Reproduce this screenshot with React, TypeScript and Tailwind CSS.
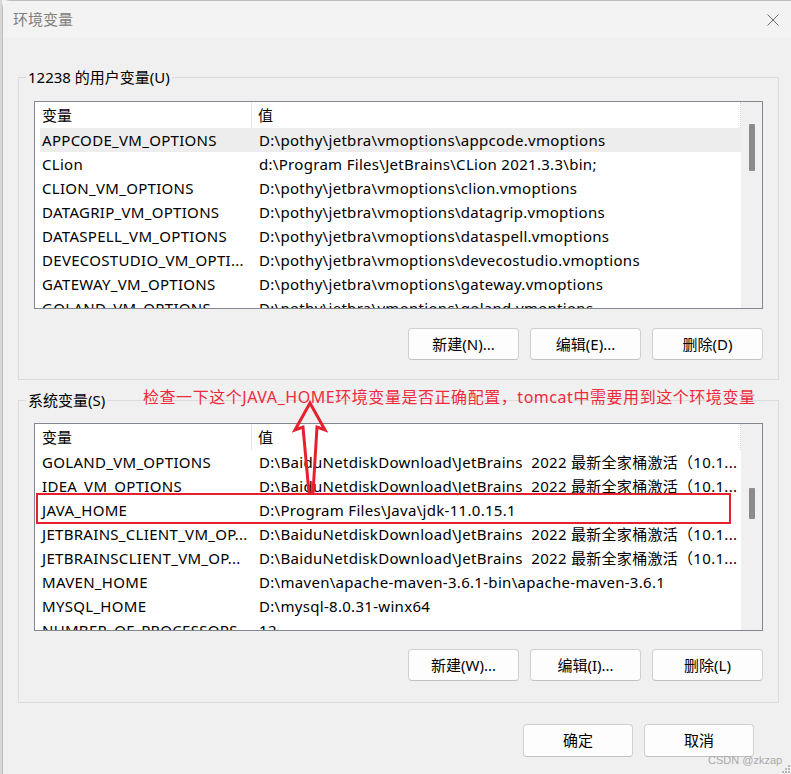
import React from "react";

type EnvVar = { name: string; value: string };

const userVars: EnvVar[] = [
  { name: "APPCODE_VM_OPTIONS", value: "D:\\pothy\\jetbra\\vmoptions\\appcode.vmoptions" },
  { name: "CLion", value: "d:\\Program Files\\JetBrains\\CLion 2021.3.3\\bin;" },
  { name: "CLION_VM_OPTIONS", value: "D:\\pothy\\jetbra\\vmoptions\\clion.vmoptions" },
  { name: "DATAGRIP_VM_OPTIONS", value: "D:\\pothy\\jetbra\\vmoptions\\datagrip.vmoptions" },
  { name: "DATASPELL_VM_OPTIONS", value: "D:\\pothy\\jetbra\\vmoptions\\dataspell.vmoptions" },
  { name: "DEVECOSTUDIO_VM_OPTI...", value: "D:\\pothy\\jetbra\\vmoptions\\devecostudio.vmoptions" },
  { name: "GATEWAY_VM_OPTIONS", value: "D:\\pothy\\jetbra\\vmoptions\\gateway.vmoptions" },
  { name: "GOLAND_VM_OPTIONS", value: "D:\\pothy\\jetbra\\vmoptions\\goland.vmoptions" },
];

const jetbrainsPath = "D:\\BaiduNetdiskDownload\\JetBrains  2022 最新全家桶激活（10.1...";

const systemVars: EnvVar[] = [
  { name: "GOLAND_VM_OPTIONS", value: jetbrainsPath },
  { name: "IDEA_VM_OPTIONS", value: jetbrainsPath },
  { name: "JAVA_HOME", value: "D:\\Program Files\\Java\\jdk-11.0.15.1" },
  { name: "JETBRAINS_CLIENT_VM_OP...", value: jetbrainsPath },
  { name: "JETBRAINSCLIENT_VM_OP...", value: jetbrainsPath },
  { name: "MAVEN_HOME", value: "D:\\maven\\apache-maven-3.6.1-bin\\apache-maven-3.6.1" },
  { name: "MYSQL_HOME", value: "D:\\mysql-8.0.31-winx64" },
  { name: "NUMBER_OF_PROCESSORS", value: "12" },
];

function WinButton({ label, className }: { label: string; className: string }) {
  return (
    <button
      className={
        "bg-[#fdfdfd] border border-[#d0d0d0] border-b-[#c2c2c2] rounded-[4px] text-[15px] text-black flex items-center justify-center " +
        className
      }
    >
      {label}
    </button>
  );
}

function VarList({
  vars,
  selected,
  thumbClass,
}: {
  vars: EnvVar[];
  selected?: number;
  thumbClass: string;
}) {
  return (
    <div className="h-[208px] border border-[#828790] bg-white flex overflow-hidden">
      <div className="flex-1 pl-[5px] overflow-hidden">
        <div className="flex h-[26px] items-center text-[15px]">
          <div className="w-[212px] h-full pl-[2px] flex items-center border-r border-[#e5e5e5]">变量</div>
          <div className="flex-1 h-full pl-[6px] flex items-center border-r border-dotted border-[#d6d6d6]">值</div>
        </div>
        {vars.map((v, i) => (
          <div
            key={v.name + i}
            className={
              "flex h-[24px] items-center text-[15px] tracking-[0.3px] whitespace-pre " +
              (i === selected ? "bg-[#ededed]" : "")
            }
          >
            <div className="w-[212px] pl-[2px] overflow-hidden">{v.name}</div>
            <div className="flex-1 pl-[7px] overflow-hidden">{v.value}</div>
          </div>
        ))}
      </div>
      <div className="w-[21px] bg-[#f0f0f0] flex flex-col items-center">
        <div className={"w-[6px] rounded-[1px] bg-[#8a8a8f] " + thumbClass} />
      </div>
    </div>
  );
}

export default function App() {
  return (
    <div className="relative w-[791px] h-[774px] flex bg-[#f0f0f0] overflow-hidden text-black font-['Noto_Sans','Noto_Sans_CJK_SC',sans-serif]">
      {/* sliver of the window behind */}
      <div className="w-[2px] bg-[#d6d6d6]" />

      <div className="flex-1 flex flex-col border-l border-t border-[#bdbdbd] rounded-tl-[8px] bg-[#f0f0f0]">
        {/* title bar */}
        <div className="h-[37px] flex items-center justify-between pl-[10px] pr-[12px] bg-[#f3f3f3]">
          <span className="text-[15px] text-[#808080]">环境变量</span>
          <svg width="12" height="12" viewBox="0 0 12 12">
            <path d="M0.5 0.5 L11.5 11.5 M11.5 0.5 L0.5 11.5" stroke="#6a6a6a" strokeWidth="1" />
          </svg>
        </div>

        {/* user variables */}
        <fieldset className="ml-[15px] mt-[29px] w-[761px] border border-[#dcdcdc] px-[15px] pb-[19px]">
          <legend className="ml-[-8px] px-[2px] text-[15px] leading-[20px]">12238 的用户变量(U)</legend>
          <div className="mt-[14px]">
            <VarList vars={userVars} selected={0} thumbClass="mt-[22px] h-[47px]" />
          </div>
          <div className="mt-[19px] flex justify-end gap-[11px]">
            <WinButton label="新建(N)..." className="w-[111px] h-[32px]" />
            <WinButton label="编辑(E)..." className="w-[111px] h-[32px]" />
            <WinButton label="删除(D)" className="w-[111px] h-[32px]" />
          </div>
        </fieldset>

        {/* system variables */}
        <fieldset className="ml-[15px] mt-[10px] w-[761px] border border-[#dcdcdc] px-[15px] pb-[21px]">
          <legend className="ml-[-8px] px-[2px] text-[15px] leading-[20px]">系统变量(S)</legend>
          <div className="mt-[13px]">
            <VarList vars={systemVars} thumbClass="mt-[64px] h-[31px]" />
          </div>
          <div className="mt-[18px] flex justify-end gap-[11px]">
            <WinButton label="新建(W)..." className="w-[111px] h-[32px]" />
            <WinButton label="编辑(I)..." className="w-[111px] h-[32px]" />
            <WinButton label="删除(L)" className="w-[111px] h-[32px]" />
          </div>
        </fieldset>

        <div className="mt-[21px] mr-[37px] flex justify-end gap-[11px]">
          <WinButton label="确定" className="w-[110px] h-[33px]" />
          <WinButton label="取消" className="w-[110px] h-[33px]" />
        </div>
      </div>

      {/* red note drawn over the dialog */}
      <div className="absolute left-[143px] top-[386px] text-[16px] leading-[22px] tracking-[0.55px] text-[#ee2a3b] whitespace-nowrap">
        检查一下这个JAVA_HOME环境变量是否正确配置，tomcat中需要用到这个环境变量
      </div>
      <svg className="absolute left-[290px] top-[398px]" width="40" height="96" viewBox="0 0 40 96">
        <polygon
          points="20,5 5,32 13,29 19,95 23,95 27,29 35,32"
          fill="none"
          stroke="#e8202e"
          strokeWidth="3"
          strokeLinejoin="miter"
        />
      </svg>
      <div className="absolute left-[36px] top-[493px] w-[695px] h-[31px] border-2 border-[#e8202e]" />

      {/* watermark + size grip */}
      <div className="absolute left-[708px] top-[752px] text-[11px] text-[#aaaaaa] font-['Liberation_Sans',sans-serif]">
        CSDN @zkzap
      </div>
      <svg className="absolute left-[782px] top-[765px]" width="9" height="9" viewBox="0 0 9 9">
        <rect x="6" y="0" width="2" height="2" fill="#b8b8b8" />
        <rect x="3" y="3" width="2" height="2" fill="#b8b8b8" />
        <rect x="6" y="3" width="2" height="2" fill="#b8b8b8" />
        <rect x="0" y="6" width="2" height="2" fill="#b8b8b8" />
        <rect x="3" y="6" width="2" height="2" fill="#b8b8b8" />
        <rect x="6" y="6" width="2" height="2" fill="#b8b8b8" />
      </svg>
    </div>
  );
}
